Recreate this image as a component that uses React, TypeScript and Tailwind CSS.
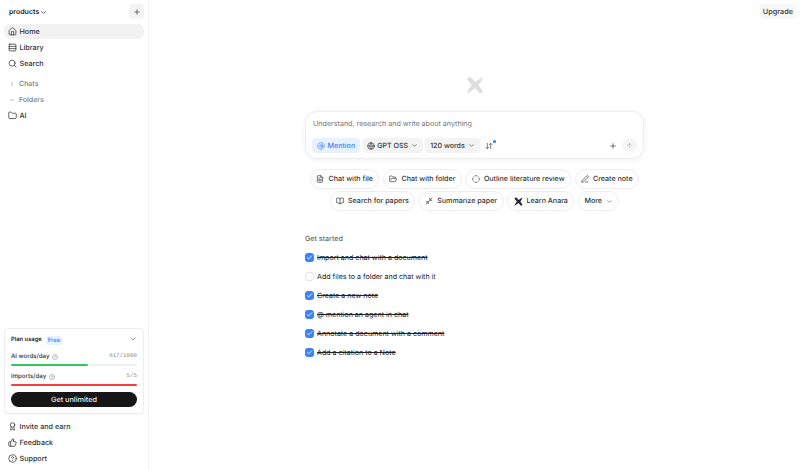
import React from "react";
import { Home, Rows3, Search, ChevronRight, ChevronDown, Folder, Plus, HelpCircle, Award, ThumbsUp, AtSign, Globe, ArrowDownUp, ArrowUp, FileText, FolderOpen, CircleDashed, PenLine, BookOpen, Minimize2, Check } from "lucide-react";

const Logo = ({ size, color }: { size: number; color: string }) => (
  <svg width={size} height={size} viewBox="0 0 20 20" fill={color}>
    <path d="M1 3 L4.5 0.5 C7 3 9 5.5 10.5 6.5 C12.5 5 15 3 19 1 C18 5 15.5 8 14 10 C15.5 12.5 17.5 15 19 18 L15.5 19.5 C13.5 17 11.5 15 10 13.5 C7.5 15.5 5 17.5 1 19.5 C2 15.5 4.5 12.5 6.5 10 C4.5 8 2.5 5.5 1 3 Z" />
  </svg>
);

const NavItem = ({ icon, label, active }: { icon: React.ReactNode; label: string; active?: boolean }) => (
  <div className={`flex h-[15px] items-center gap-[2.5px] rounded-[6px] pl-[4px] text-[7.2px] font-medium text-[#333] ${active ? "bg-[#f2f2f2]" : ""}`}>
    <span className="flex w-[9px] shrink-0 justify-center">{icon}</span>
    <span className="pt-[2px]">{label}</span>
  </div>
);

const Chip = ({ icon, label, chevron }: { icon?: React.ReactNode; label: string; chevron?: boolean }) => (
  <div className="flex h-[20px] items-center gap-[4px] rounded-full border border-[#eeeeee] bg-white px-[5.5px] text-[7.1px] font-medium text-[#333]">
    {icon}
    <span className="pt-[1px]">{label}</span>
    {chevron && <ChevronDown size={7} strokeWidth={2} className="text-[#555]" />}
  </div>
);

const Task = ({ label, done }: { label: string; done?: boolean }) => (
  <div className="flex h-[19px] items-center gap-[3px] text-[7.1px] text-[#222]">
    {done ? (
      <span className="flex h-[9px] w-[9px] items-center justify-center rounded-[3px] bg-[#3b82f6]">
        <Check size={7} strokeWidth={3} className="text-white" />
      </span>
    ) : (
      <span className="h-[9px] w-[9px] rounded-[3.5px] border border-[#e2e2e2] bg-white" />
    )}
    <span className={`pt-[1px] ${done ? "line-through" : ""}`}>{label}</span>
  </div>
);

export default function App() {
  return (
    <div className="flex h-[470px] w-[800px] overflow-hidden bg-white font-['Inter',sans-serif] [text-rendering:geometricPrecision]">
      <aside className="flex w-[149px] shrink-0 flex-col border-r border-[#f2f2f2] px-[4px]">
        <div className="flex h-[24px] items-center justify-between pl-[5px] pb-[1px]">
          <div className="flex items-center gap-[1px] pt-[2px] text-[7px] font-semibold text-[#222]">
            products <ChevronDown size={7} strokeWidth={2.5} />
          </div>
          <div className="flex h-[15px] w-[15px] items-center justify-center rounded-[4px] bg-[#f3f3f3]">
            <Plus size={8} className="text-[#333]" />
          </div>
        </div>
        <div className="flex flex-col gap-[1px]">
          <NavItem active icon={<Home size={9} />} label="Home" />
          <NavItem icon={<Rows3 size={9} />} label="Library" />
          <NavItem icon={<Search size={9} />} label="Search" />
        </div>
        <div className="mt-[5px] flex flex-col text-[7px] font-medium text-[#777]">
          <div className="flex h-[16px] items-center gap-[4px] pl-[5px]"><ChevronRight size={6} />Chats</div>
          <div className="flex h-[16px] items-center gap-[4px] pl-[5px]"><ChevronDown size={6} />Folders</div>
        </div>
        <NavItem icon={<Folder size={9} />} label="AI" />

        <div className="mt-auto rounded-[4px] border border-[#eeeeee] bg-white px-[6px] pb-[6px] pt-[5.5px] shadow-[0_1px_2px_rgba(0,0,0,0.04)]">
          <div className="flex h-[9px] items-center justify-between">
            <div className="flex items-center gap-[4px] pt-[2px] text-[5.8px] font-semibold text-[#222]">
              Plan usage
              <span className="rounded-[2px] bg-[#e8f1fe] px-[2px] text-[6px] font-medium text-[#3b82f6]">Free</span>
            </div>
            <ChevronDown size={8} className="text-[#666]" />
          </div>
          <div className="mt-[7.5px] flex h-[10px] items-center justify-between">
            <div className="flex items-center gap-[3px] pt-[1px] text-[6.1px] font-medium text-[#333]">AI words/day <HelpCircle size={6} className="text-[#888]" /></div>
            <span className="font-['Liberation_Mono',monospace] text-[5.8px] text-[#888]">617/1000</span>
          </div>
          <div className="mt-[2.5px] flex h-[2px] gap-[1.5px]">
            <div className="w-[61%] rounded-full bg-[#34c759]" />
            <div className="flex-1 rounded-full bg-[#e6f6ea]" />
          </div>
          <div className="mt-[5.5px] flex h-[10px] items-center justify-between">
            <div className="flex items-center gap-[3px] pt-[1px] text-[6.1px] font-medium text-[#333]">Imports/day <HelpCircle size={6} className="text-[#888]" /></div>
            <span className="font-['Liberation_Mono',monospace] text-[5.8px] text-[#888]">5/5</span>
          </div>
          <div className="mt-[2.5px] h-[2px] rounded-full bg-[#f43f3f]" />
          <div className="mt-[6.5px] flex h-[15px] items-center justify-center rounded-full bg-[#161616] pt-[2px] text-[7.3px] font-medium text-[#eee]">Get unlimited</div>
        </div>
        <div className="mb-[4px] mt-[5px] flex flex-col gap-[1px]">
          <NavItem icon={<Award size={9} />} label="Invite and earn" />
          <NavItem icon={<ThumbsUp size={9} />} label="Feedback" />
          <NavItem icon={<HelpCircle size={9} />} label="Support" />
        </div>
      </aside>
      <main className="flex flex-1 flex-col items-center">
        <div className="flex w-full justify-end pr-[4px] pt-[4px]">
          <div className="flex h-[15px] items-center rounded-[4px] bg-[#f7f7f7] px-[3px] pt-[2px] text-[7.3px] font-medium text-[#333]">Upgrade</div>
        </div>
        <div className="mt-[57px]"><Logo size={18} color="#dedede" /></div>
        <div className="mt-[17px] flex h-[48px] w-[339px] flex-col justify-between rounded-xl border border-[#eee] bg-white px-[6px] pb-[5px] pt-[7px] shadow-[0_1px_6px_rgba(0,0,0,0.06)]">
          <div className="pl-[1px] text-[7.15px] leading-[10px] text-[#777]">Understand, research and write about anything</div>
          <div className="flex items-center gap-[2.5px]">
            <div className="flex h-[15px] items-center gap-[2.5px] rounded-[4px] bg-[#e8f1fe] px-[5px] text-[7.1px] font-medium text-[#3b82f6]"><AtSign size={8} /><span className="pt-[1px]">Mention</span></div>
            <div className="flex h-[15px] items-center gap-[2px] rounded-[4px] bg-[#f3f3f3] px-[4.5px] text-[7.1px] font-medium text-[#333]"><Globe size={8} /><span className="pt-[1px]">GPT OSS</span><ChevronDown size={7} className="ml-[1px]" /></div>
            <div className="flex h-[15px] items-center gap-[2px] rounded-[4px] bg-[#f3f3f3] px-[5px] text-[7.1px] font-medium text-[#333]"><span className="pt-[1px]">120 words</span><ChevronDown size={7} className="ml-[1px]" /></div>
            <div className="relative ml-[3px] text-[#444]"><ArrowDownUp size={8} /><span className="absolute right-[-3px] top-[-2px] h-[3px] w-[3px] rounded-full bg-[#2f7bf6]" /></div>
            <Plus size={8} className="ml-auto text-[#333]" />
            <div className="ml-[3px] flex h-[15px] w-[15px] items-center justify-center rounded-full bg-[#f5f5f5]"><ArrowUp size={7} className="text-[#aaa]" /></div>
          </div>
        </div>
        <div className="mt-[10px] flex gap-[3.5px]">
          <Chip icon={<FileText size={8} />} label="Chat with file" />
          <Chip icon={<FolderOpen size={8} />} label="Chat with folder" />
          <Chip icon={<CircleDashed size={8} />} label="Outline literature review" />
          <Chip icon={<PenLine size={8} />} label="Create note" />
        </div>
        <div className="mt-[2px] flex gap-[3.5px]">
          <Chip icon={<BookOpen size={8} />} label="Search for papers" />
          <Chip icon={<Minimize2 size={8} />} label="Summarize paper" />
          <Chip icon={<Logo size={9} color="#222" />} label="Learn Anara" />
          <Chip label="More" chevron />
        </div>
        <div className="mt-[22px] w-[339px]">
          <div className="text-[7.1px] font-medium leading-[12px] text-[#666]">Get started</div>
          <div className="mt-[3px] flex flex-col">
            <Task done label="Import and chat with a document" />
            <Task label="Add files to a folder and chat with it" />
            <Task done label="Create a new note" />
            <Task done label="@ mention an agent in chat" />
            <Task done label="Annotate a document with a comment" />
            <Task done label="Add a citation to a Note" />
          </div>
        </div>
      </main>
    </div>
  );
}
